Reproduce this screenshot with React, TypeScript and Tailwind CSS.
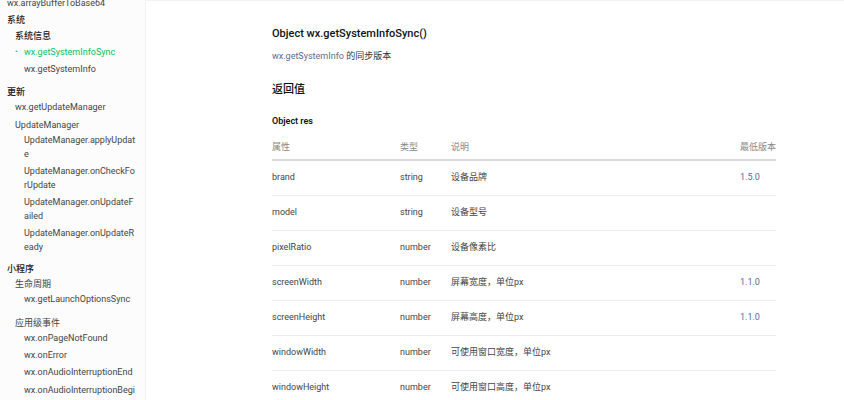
import React from 'react';

type NavItem = {
  lines: string[];
  level: 0 | 1 | 2;
  mt: string;
  active?: boolean;
  strong?: boolean;
};

const nav: NavItem[] = [
  { lines: ['wx.arrayBufferToBase64'], level: 0, mt: 'mt-[-4px]' },
  { lines: ['系统'], level: 0, mt: 'mt-[3px]', strong: true },
  { lines: ['系统信息'], level: 1, mt: 'mt-[2px]', strong: true },
  { lines: ['wx.getSystemInfoSync'], level: 2, mt: 'mt-[2px]', active: true },
  { lines: ['wx.getSystemInfo'], level: 2, mt: 'mt-[3px]' },
  { lines: ['更新'], level: 0, mt: 'mt-[9px]', strong: true },
  { lines: ['wx.getUpdateManager'], level: 1, mt: 'mt-[1px]' },
  { lines: ['UpdateManager'], level: 1, mt: 'mt-[4px]' },
  { lines: ['UpdateManager.applyUpdat', 'e'], level: 2, mt: 'mt-[1px]' },
  { lines: ['UpdateManager.onCheckFo', 'rUpdate'], level: 2, mt: 'mt-[3px]' },
  { lines: ['UpdateManager.onUpdateF', 'ailed'], level: 2, mt: 'mt-[3px]' },
  { lines: ['UpdateManager.onUpdateR', 'eady'], level: 2, mt: 'mt-[3px]' },
  { lines: ['小程序'], level: 0, mt: 'mt-[8px]', strong: true },
  { lines: ['生命周期'], level: 1, mt: 'mt-[1px]' },
  { lines: ['wx.getLaunchOptionsSync'], level: 2, mt: 'mt-[1px]' },
  { lines: ['应用级事件'], level: 1, mt: 'mt-[10px]' },
  { lines: ['wx.onPageNotFound'], level: 2, mt: 'mt-[1px]' },
  { lines: ['wx.onError'], level: 2, mt: 'mt-[3px]' },
  { lines: ['wx.onAudioInterruptionEnd'], level: 2, mt: 'mt-[3px]' },
  { lines: ['wx.onAudioInterruptionBegi'], level: 2, mt: 'mt-[4px]' },
];

const rows = [
  { name: 'brand', type: 'string', desc: '设备品牌', ver: '1.5.0' },
  { name: 'model', type: 'string', desc: '设备型号', ver: '' },
  { name: 'pixelRatio', type: 'number', desc: '设备像素比', ver: '' },
  { name: 'screenWidth', type: 'number', desc: '屏幕宽度，单位px', ver: '1.1.0' },
  { name: 'screenHeight', type: 'number', desc: '屏幕高度，单位px', ver: '1.1.0' },
  { name: 'windowWidth', type: 'number', desc: '可使用窗口宽度，单位px', ver: '' },
  { name: 'windowHeight', type: 'number', desc: '可使用窗口高度，单位px', ver: '' },
];

const indent = { 0: 'pl-[7px]', 1: 'pl-[15px]', 2: 'pl-[24px]' };

const Sidebar: React.FC = () => (
  <aside className="w-[146px] shrink-0 h-full overflow-hidden bg-[#fcfcfc] border-r border-[#f0f0f0]">
    {nav.map((item, i) => (
      <div
        key={i}
        className={`${item.mt} ${indent[item.level]} relative leading-[14px] text-[9px] ${
          item.active ? 'text-[#07c160]' : item.strong ? 'text-[#222] font-medium' : 'text-[#444]'
        }`}
      >
        {item.active && <span className="absolute left-[15px] top-0 text-[8px]">•</span>}
        {item.lines.map((l, j) => (
          <div key={j} className="whitespace-nowrap">{l}</div>
        ))}
      </div>
    ))}
  </aside>
);

export default function App() {
  return (
    <div
      className="w-[844px] h-[400px] flex bg-white overflow-hidden text-[#333]"
      style={{ fontFamily: 'Roboto, "Noto Sans CJK SC", sans-serif' }}
    >
      <Sidebar />
      <main className="flex-1 h-full overflow-hidden border-t border-[#f3f3f3] pl-[126px]">
        <div className="w-[504px]">
          <h1 className="mt-[24px] text-[11px] leading-[18px] font-medium text-[#111]">Object wx.getSystemInfoSync()</h1>
          <p className="mt-[7px] text-[9px] leading-[12px] text-[#333]">
            <span className="text-[#576b95]">wx.getSystemInfo</span> 的同步版本
          </p>
          <h2 className="mt-[20px] text-[11px] leading-[16px] font-medium text-[#111]">返回值</h2>
          <h3 className="mt-[17px] text-[9px] leading-[12px] font-semibold text-[#111]">Object res</h3>
          <table className="mt-[9px] w-full text-[9px] border-collapse">
            <thead>
              <tr className="border-b-2 border-[#d9d9d9] text-[#888] text-left">
                <th className="font-normal h-[24px] w-[128px] p-0 align-middle">属性</th>
                <th className="font-normal w-[51px] p-0">类型</th>
                <th className="font-normal p-0">说明</th>
                <th className="font-normal w-[35px] p-0 whitespace-nowrap">最低版本</th>
              </tr>
            </thead>
            <tbody>
              {rows.map((r) => (
                <tr key={r.name} className="border-b border-[#ececec] text-[#444]">
                  <td className="h-[35px] p-0">{r.name}</td>
                  <td className="p-0">{r.type}</td>
                  <td className="p-0">{r.desc}</td>
                  <td className="p-0 text-[#576b95]">{r.ver}</td>
                </tr>
              ))}
            </tbody>
          </table>
        </div>
      </main>
    </div>
  );
}
